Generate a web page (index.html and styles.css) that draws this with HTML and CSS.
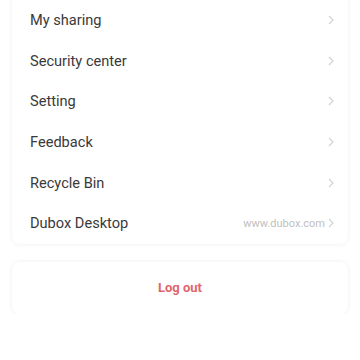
FILE: index.html
```html
<!DOCTYPE html>
<html>
<head>
<meta charset="utf-8">
<link rel="stylesheet" href="styles.css">
</head>
<body>
<div class="page">
  <div class="card menu">
    <div class="row"><span class="label">My sharing</span><span class="right"><svg class="chev" viewBox="0 0 6 10"><path d="M1 1l4 4-4 4"/></svg></span></div>
    <div class="row"><span class="label">Security center</span><span class="right"><svg class="chev" viewBox="0 0 6 10"><path d="M1 1l4 4-4 4"/></svg></span></div>
    <div class="row"><span class="label">Setting</span><span class="right"><svg class="chev" viewBox="0 0 6 10"><path d="M1 1l4 4-4 4"/></svg></span></div>
    <div class="row"><span class="label">Feedback</span><span class="right"><svg class="chev" viewBox="0 0 6 10"><path d="M1 1l4 4-4 4"/></svg></span></div>
    <div class="row"><span class="label">Recycle Bin</span><span class="right"><svg class="chev" viewBox="0 0 6 10"><path d="M1 1l4 4-4 4"/></svg></span></div>
    <div class="row"><span class="label">Dubox Desktop</span><span class="right"><span class="hint">www.dubox.com</span><svg class="chev" viewBox="0 0 6 10"><path d="M1 1l4 4-4 4"/></svg></span></div>
  </div>
  <div class="card logout">Log out</div>
</div>
</body>
</html>
```
FILE: styles.css
```css
html, body {
  margin: 0;
  padding: 0;
  background: #ffffff;
}
body {
  font-family: Roboto, "Noto Sans", sans-serif;
  overflow: hidden;
}
.page {
  padding: 0 12px;
  display: flex;
  flex-direction: column;
  gap: 18px;
}
.card {
  background: #fff;
  border-radius: 8px;
  box-shadow: 0 0 5px rgba(0, 0, 0, 0.07);
}
.menu {
  margin-top: -12px;
  padding-top: 12px;
}
.row {
  height: 40.6px;
  display: flex;
  align-items: center;
  justify-content: space-between;
  padding: 0 14px 0 18px;
}
.label {
  font-size: 14.6px;
  color: #3a3a3a;
}
.right {
  display: flex;
  align-items: center;
  gap: 3px;
}
.hint {
  font-size: 11px;
  color: #c0c0c0;
}
.chev {
  width: 6px;
  height: 10px;
  fill: none;
  stroke: #d2d2d2;
  stroke-width: 1.1;
}
.logout {
  height: 52px;
  display: flex;
  align-items: center;
  justify-content: center;
  font-size: 13px;
  font-weight: 700;
  color: #e0666e;
}
```
